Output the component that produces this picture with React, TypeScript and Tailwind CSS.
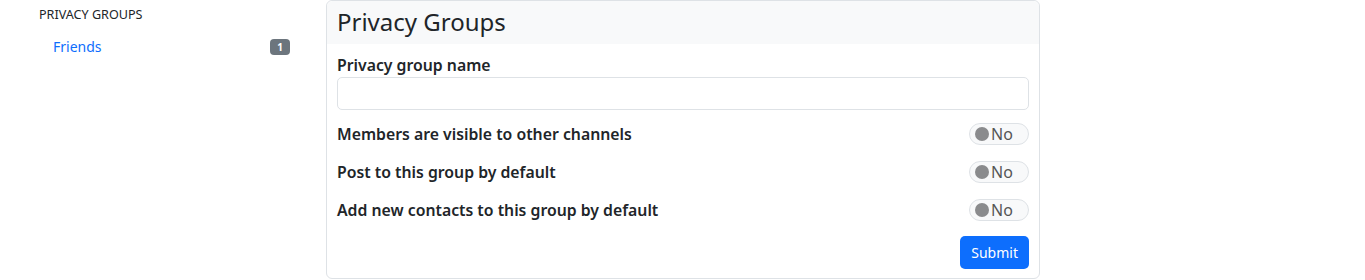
import React from 'react';

const Toggle: React.FC = () => (
  <div className="flex h-[22px] w-[60px] items-center rounded-full border border-[#dee2e6] bg-[#f8f9fa] pl-[5px]">
    <span className="h-[14px] w-[14px] rounded-full bg-[#8a8b8d]"></span>
    <span className="ml-[2px] text-[16px] leading-none text-[#555]">No</span>
  </div>
);

const rows = [
  'Members are visible to other channels',
  'Post to this group by default',
  'Add new contacts to this group by default',
];

export default function App() {
  return (
    <div className="flex h-[280px] w-[1365px] overflow-hidden bg-white font-['Noto_Sans',sans-serif] text-[#212529]">
      {/* Sidebar */}
      <aside className="w-[326px] shrink-0 pl-[39px] pr-[36px] pt-[6px]">
        <h3 className="text-[12.6px] font-normal uppercase leading-[18px]">Privacy Groups</h3>
        <ul className="mt-[13px]">
          <li className="flex items-center justify-between pl-[14px]">
            <a className="text-[14px] leading-[20px] text-[#0d6efd]">Friends</a>
            <span className="flex h-[16px] w-[20px] items-center justify-center rounded-[4px] bg-[#6c757d] text-[10px] font-bold leading-none text-white">1</span>
          </li>
        </ul>
      </aside>

      {/* Main card */}
      <section className="w-[714px] shrink-0 self-start rounded-[6px] border border-[#dee2e6]">
        <div className="h-[43px] rounded-t-[6px] bg-[#f8f9fa] px-[10px] pt-[5px]">
          <h2 className="text-[24px] leading-[32px]">Privacy Groups</h2>
        </div>
        <form className="px-[10px] pt-[11px] pb-[9px]">
          <label className="block text-[15.8px] font-semibold leading-[20px]">Privacy group name</label>
          <input className="mt-[2px] block h-[33px] w-full rounded-[5px] border border-[#dee2e6] bg-white" />
          <div className="mt-[13px] flex flex-col gap-[16px]">
            {rows.map((r) => (
              <div key={r} className="flex items-center justify-between">
                <span className="text-[15.8px] font-semibold leading-[22px]">{r}</span>
                <Toggle />
              </div>
            ))}
          </div>
          <div className="mt-[15px] flex justify-end">
            <button className="h-[33px] rounded-[5px] bg-[#0d6efd] px-[11px] text-[14px] text-white">Submit</button>
          </div>
        </form>
      </section>
    </div>
  );
}
